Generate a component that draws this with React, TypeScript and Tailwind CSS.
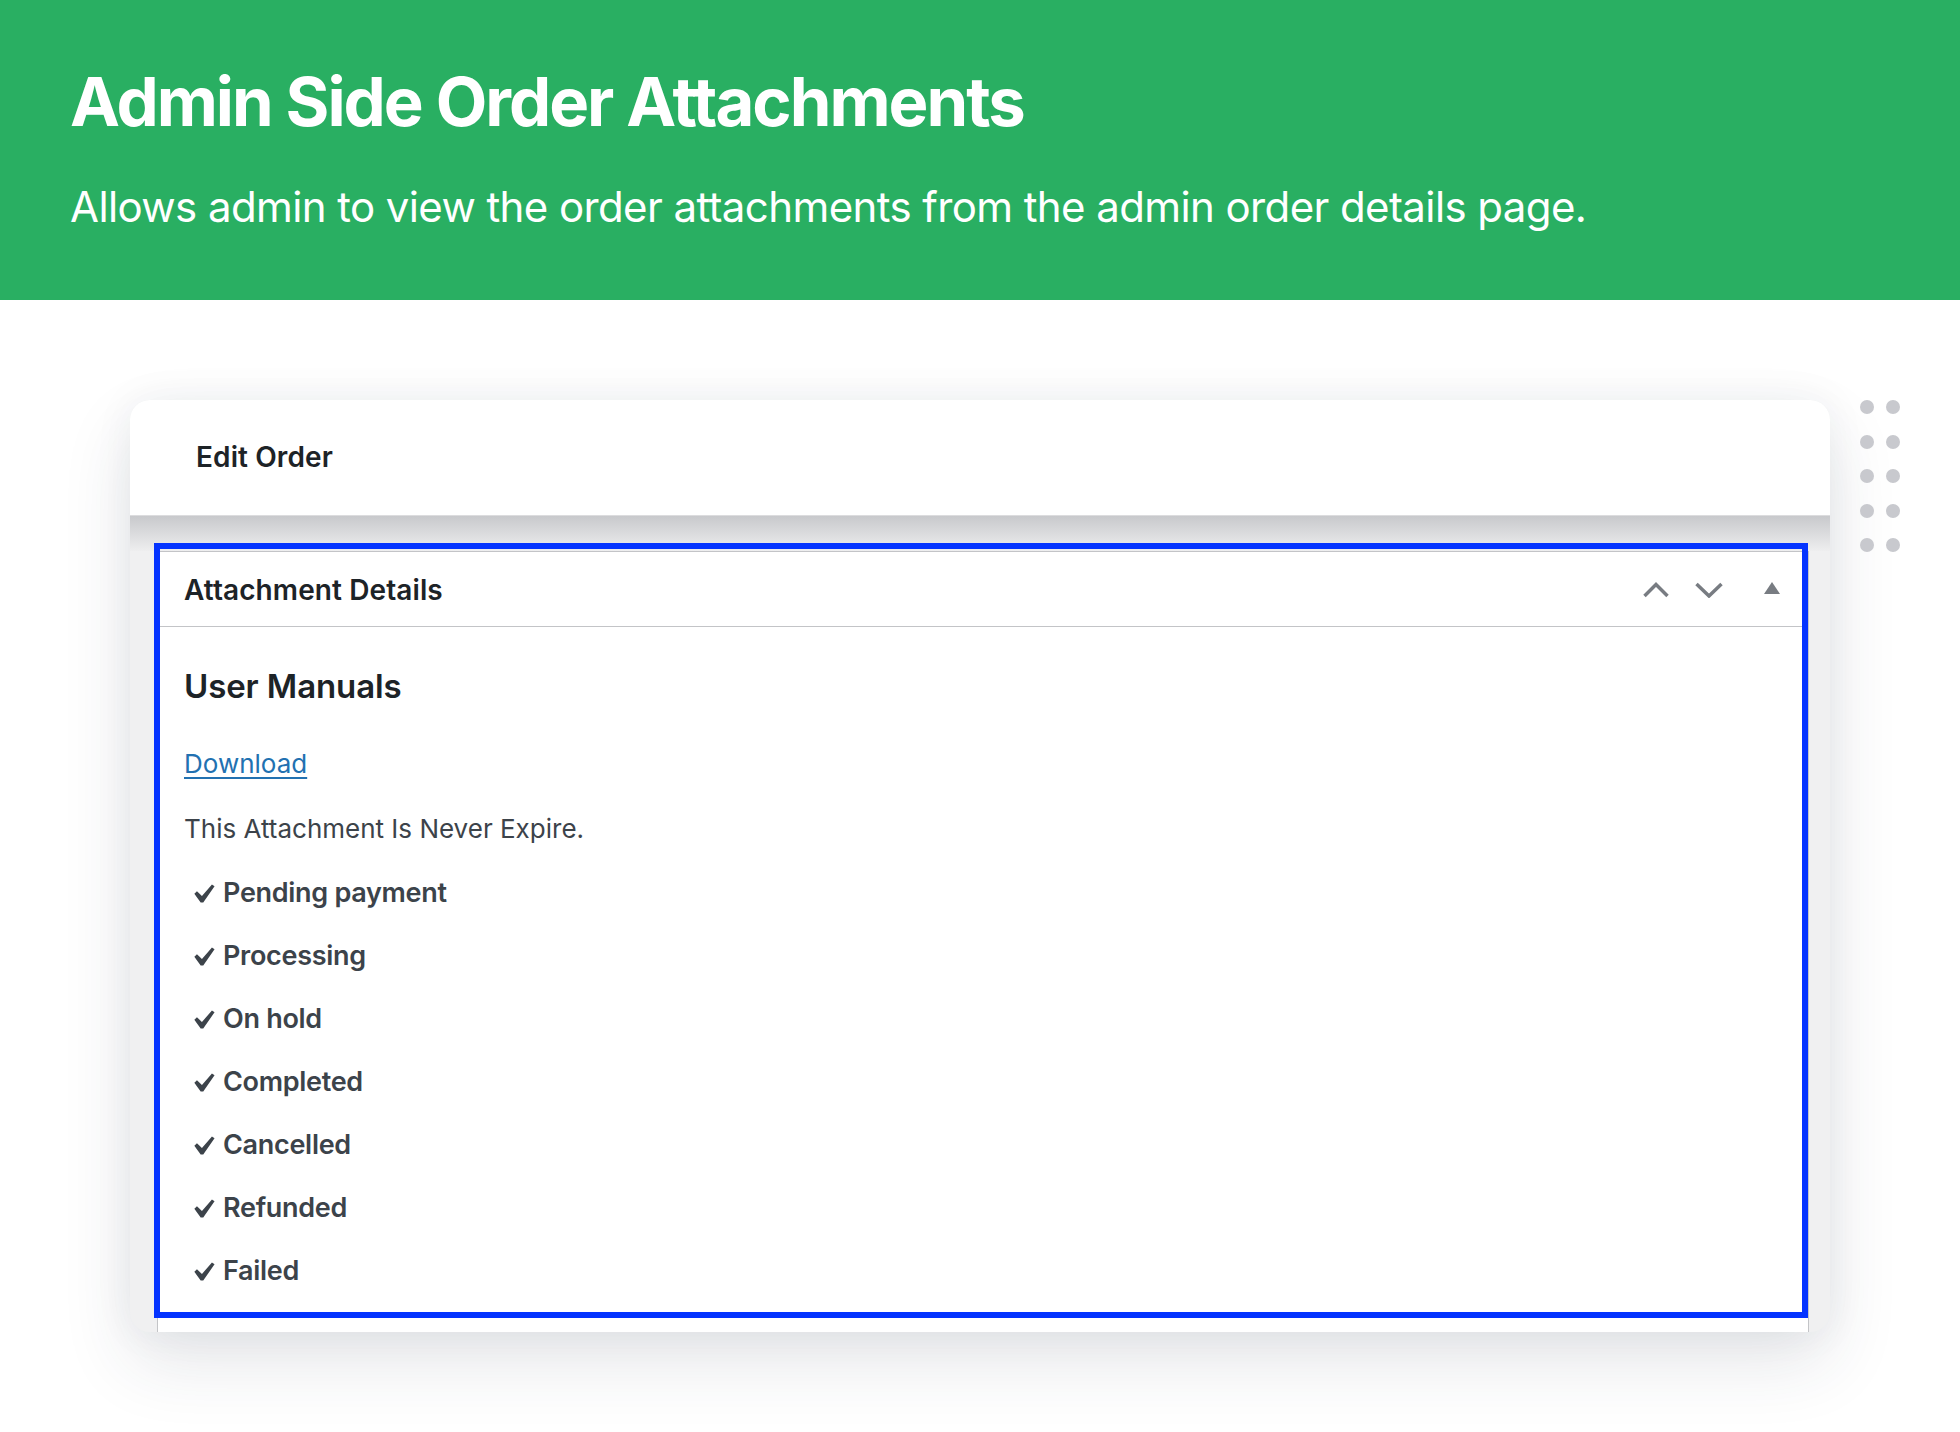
import React from "react";

const items = [
  "Pending payment",
  "Processing",
  "On hold",
  "Completed",
  "Cancelled",
  "Refunded",
  "Failed",
];

function Check() {
  return (
    <svg width="21" height="19" viewBox="5.6 4.7 10.8 9.7" className="shrink-0">
      <path d="M14.83 4.89l1.34.94-5.81 8.38H9.02L5.78 9.67l1.34-1.25 2.57 2.4z" fill="#3c434a" />
    </svg>
  );
}

function ChevronUp() {
  return (
    <svg width="26" height="16" viewBox="0 0 26 16">
      <polyline points="1.5,14 13,2.5 24.5,14" fill="none" stroke="#787c82" strokeWidth="3.5" />
    </svg>
  );
}

function ChevronDown() {
  return (
    <svg width="28" height="16" viewBox="0 0 28 16">
      <polyline points="1.5,2 14,14 26.5,2" fill="none" stroke="#787c82" strokeWidth="3.5" />
    </svg>
  );
}

function Triangle() {
  return (
    <svg width="16" height="12" viewBox="0 0 16 12">
      <polygon points="8,0 16,12 0,12" fill="#787c82" />
    </svg>
  );
}

export default function App() {
  return (
    <div className="w-[1960px] h-[1432px] bg-white overflow-hidden font-['Inter',sans-serif]">
      <header className="h-[300px] bg-[#29af62] pl-[70px] pt-[68px] text-white">
        <h1 className="text-[67px] leading-none font-bold tracking-[-2px]">
          Admin Side Order Attachments
        </h1>
        <p className="mt-[51px] text-[42px] leading-none font-normal tracking-[-0.6px]">
          Allows admin to view the order attachments from the admin order details page.
        </p>
      </header>

      <main className="flex items-start pt-[100px] pl-[130px] gap-[30px]">
        <div className="w-[1700px] h-[932px] rounded-[20px] bg-[#f0f0f1] overflow-hidden shadow-[0_30px_70px_rgba(40,50,70,0.12),0_0_40px_rgba(40,50,70,0.06)] flex flex-col">
          <div className="h-[116px] shrink-0 bg-white border-b border-[#dcdcde] flex items-center pb-[2px] pl-[66px]">
            <span className="text-[28px] font-semibold text-[#1d2327] tracking-[0.1px]">Edit Order</span>
          </div>
          <div className="h-[35px] shrink-0 bg-gradient-to-b from-[#c8c9cc] to-[#eeeeef]" />
          <div className="pl-[27px] pr-[21px] flex-1">
            <div className="relative bg-white border border-[#c3c4c7] h-[820px]">
              <div className="h-[75px] border-b border-[#c3c4c7] flex items-center pl-[26px] pr-[28px] pt-[1px]">
                <span className="text-[28px] font-semibold text-[#1d2327] flex-1 tracking-[0.1px]">
                  Attachment Details
                </span>
                <div className="flex items-center">
                  <ChevronUp />
                  <div className="w-[26px]" />
                  <ChevronDown />
                  <div className="w-[41px]" />
                  <div className="-mt-[3px]">
                    <Triangle />
                  </div>
                </div>
              </div>
              <div className="pl-[26px] pt-[40px]">
                <h3 className="text-[33px] leading-[38px] font-semibold text-[#1d2327] tracking-[-0.1px]">User Manuals</h3>
                <a
                  href="#"
                  className="block w-fit mt-[41px] text-[26px] leading-[36px] text-[#2271b1] underline decoration-[2px] underline-offset-[4px]"
                >
                  Download
                </a>
                <p className="mt-[29px] text-[26px] leading-[36px] text-[#3c434a]">
                  This Attachment Is Never Expire.
                </p>
                <ul className="mt-[14.5px] pl-[10px]">
                  {items.map((t) => (
                    <li key={t} className="h-[63px] flex items-center gap-[8px]">
                      <Check />
                      <span className="text-[27px] font-semibold text-[#3c434a] tracking-[-0.3px]">{t}</span>
                    </li>
                  ))}
                </ul>
              </div>
              <div className="absolute -top-[9px] -left-[4px] right-[0px] h-[775px] border-[6px] border-[#0433ff] pointer-events-none" />
            </div>
          </div>
        </div>

        <div className="grid grid-cols-2 gap-x-[12px] gap-y-[20.5px]">
          {Array.from({ length: 10 }).map((_, i) => (
            <div key={i} className="w-[14px] h-[14px] rounded-full bg-[#c8c9ce]" />
          ))}
        </div>
      </main>
    </div>
  );
}
